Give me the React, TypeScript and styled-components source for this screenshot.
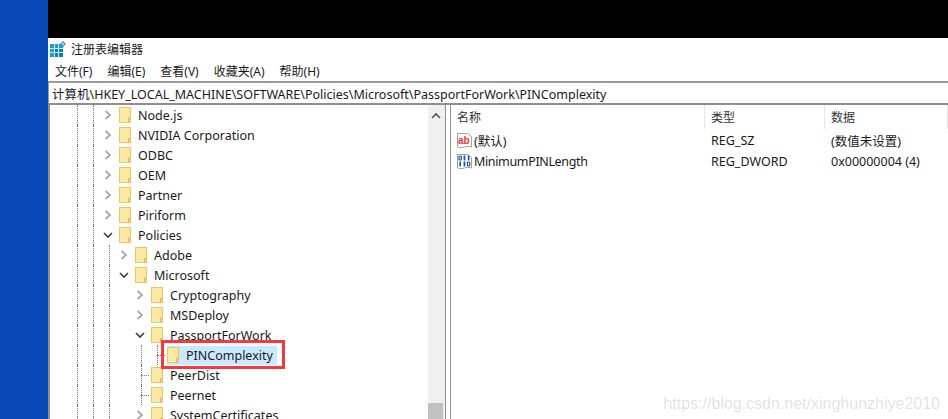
import React from 'react';
import styled, { createGlobalStyle } from 'styled-components';

const UI_FONT = '"Noto Sans", "Noto Sans CJK SC", sans-serif';

const GlobalStyle = createGlobalStyle`
  html, body {
    margin: 0;
    padding: 0;
    background: #fff;
  }
  * {
    box-sizing: border-box;
  }
`;

const Screen = styled.div`
  width: 948px;
  height: 419px;
  display: flex;
  overflow: hidden;
  position: relative;
  font-family: ${UI_FONT};
  color: #1a1a1a;
`;

const Desktop = styled.div`
  width: 48px;
  flex: none;
  background: #0a48b8;
`;

const Main = styled.div`
  flex: 1;
  display: flex;
  flex-direction: column;
  min-width: 0;
`;

const BlackBand = styled.div`
  height: 38px;
  flex: none;
  background: #000;
`;

const TitleBar = styled.div`
  height: 22px;
  flex: none;
  display: flex;
  align-items: center;
  gap: 5px;
  padding: 0 0 0 2px;
  font-size: 12px;
  background: #fff;
`;

const MenuBar = styled.div`
  height: 21px;
  flex: none;
  display: flex;
  align-items: center;
  gap: 15px;
  padding: 0 0 0 7px;
  font-size: 12px;
`;

const AddressBar = styled.div`
  height: 24px;
  flex: none;
  display: flex;
  align-items: center;
  padding-left: 3px;
  font-size: 12.5px;
  white-space: nowrap;
  border-top: 2px solid #9b9b9b;
  border-bottom: 2px solid #8f8f8f;
  border-left: 1px solid #9b9b9b;
`;

const Panes = styled.div`
  flex: 1;
  display: flex;
  min-height: 0;
`;

const TreePane = styled.div`
  width: 397px;
  flex: none;
  display: flex;
  border-left: 2px solid #8f8f8f;
`;

const Tree = styled.div`
  flex: 1;
  padding-left: 19px;
  overflow: hidden;
`;

const Row = styled.div`
  height: 20px;
  display: flex;
  align-items: center;
  font-size: 12.5px;
  white-space: nowrap;
`;

const IndentCell = styled.div<{ $line?: boolean; $tee?: boolean }>`
  width: 16px;
  height: 20px;
  flex: none;
  position: relative;
  display: flex;
  align-items: center;
  justify-content: center;

  &::before {
    content: '';
    position: absolute;
    left: 8px;
    top: 0;
    bottom: 0;
    border-left: ${({ $line }) => ($line ? '1px dotted #777' : 'none')};
  }

  &::after {
    content: '';
    position: absolute;
    left: 8px;
    right: 0;
    top: 10px;
    border-top: ${({ $tee }) => ($tee ? '1px dotted #777' : 'none')};
  }
`;

const FolderSlot = styled.div`
  margin-left: 2px;
  width: 12px;
  height: 16px;
  flex: none;
  display: flex;
`;

const Label = styled.span`
  margin-left: 7px;
`;

const SelectedRow = styled(Row)`
  position: relative;
`;

const SelectedBg = styled.div`
  display: flex;
  align-items: center;
  height: 19px;
  margin-left: 2px;
  padding: 0 4px 0 0;
  background: #cce8ff;

  ${FolderSlot} {
    margin-left: 0;
  }
`;

const RedBox = styled.div`
  position: absolute;
  left: 92px;
  top: -5px;
  width: 124px;
  height: 29px;
  border: 3px solid #f4383c;
  z-index: 2;
`;

const ScrollBar = styled.div`
  width: 17px;
  flex: none;
  background: #f0f0f0;
  display: flex;
  flex-direction: column;
  justify-content: space-between;
  padding-top: 7px;
`;

const ScrollArrow = styled.svg`
  margin-left: 3px;
`;

const ScrollThumb = styled.div`
  width: 15px;
  height: 16px;
  background: #c1c1c1;
`;

const Splitter = styled.div`
  width: 6px;
  flex: none;
  border-left: 1px solid #8f8f8f;
  border-right: 1px solid #8f8f8f;
`;

const ListPane = styled.div`
  flex: 1;
  display: flex;
  flex-direction: column;
  min-width: 0;
`;

const ListHeader = styled.div`
  display: grid;
  grid-template-columns: 254px 120px 1fr;
  height: 25px;
  padding-bottom: 1px;
  font-size: 12px;
  color: #333;
`;

const HeaderCell = styled.div`
  display: flex;
  align-items: center;
  padding-left: 6px;
  border-right: 1px solid #e5e5e5;
`;

const ListRow = styled.div`
  display: grid;
  grid-template-columns: 254px 120px 1fr;
  height: 21px;
  align-items: center;
  font-size: 12.5px;
  white-space: nowrap;
`;

const NameCell = styled.div`
  display: flex;
  align-items: center;
  gap: 1px;
  padding-left: 5px;
`;

const LongName = styled.span`
  letter-spacing: -0.35px;
`;

const ValueCell = styled.div`
  padding-left: 6px;
`;

const Watermark = styled.div`
  position: absolute;
  right: 8px;
  bottom: 6px;
  font-family: "Liberation Sans", sans-serif;
  font-size: 16px;
  color: rgba(150, 150, 150, 0.28);
`;

const ChevronSvg = styled.svg`
  position: relative;
  z-index: 1;
  left: -1px;
  background: #fff;
`;

const Chevron: React.FC<{ open?: boolean }> = ({ open }) => (
  <ChevronSvg width="10" height="10" viewBox="0 0 10 10">
    {open ? (
      <path d="M1 3 L5 7 L9 3" fill="none" stroke="#404040" strokeWidth="1.7" />
    ) : (
      <path d="M2.5 1 L7 5 L2.5 9" fill="none" stroke="#a9a9a9" strokeWidth="1.8" />
    )}
  </ChevronSvg>
);

const Folder: React.FC = () => (
  <svg width="12" height="16" viewBox="0 0 12 16">
    <rect x="0.5" y="0.5" width="11" height="15" fill="#fde48f" stroke="#e9c767" />
    <rect x="1" y="1" width="9" height="14" fill="#fee9a6" />
    <path d="M9.5 15.5 V11.5 H11.5" fill="none" stroke="#dcb44e" />
  </svg>
);

const RegEditIcon: React.FC = () => (
  <svg width="16" height="16" viewBox="0 0 16 16">
    <rect x="0" y="3" width="13" height="13" fill="#1f9bd6" />
    <rect x="5" y="7" width="8" height="9" fill="#0f7fc0" />
    <path d="M4.5 3 V16 M8.5 3 V16 M0 7.5 H13 M0 11.5 H13" stroke="#cdeefa" strokeWidth="1" />
    <path d="M13 0 L16 3 L13 6 L10 3 Z" fill="#2f9fd8" />
    <circle cx="13" cy="3" r="1" fill="#bfe8f8" />
  </svg>
);

const PAGE_OUTLINE = 'M1.5 1.5 H11.5 L15.5 4.5 V15 Q12 13.5 8.5 15 Q5 16.5 1.5 15 Z';

const StringIcon: React.FC = () => (
  <svg width="17" height="18" viewBox="0 0 17 18">
    <path d={PAGE_OUTLINE} fill="#fff" stroke="#a0a0a0" />
    <text x="2" y="11.5" fontSize="10" fontWeight="700" fill="#d6412b" fontFamily="Liberation Sans, sans-serif">ab</text>
  </svg>
);

// binary marks of the DWORD icon: a ring for each 0, a bar for each 1
const BinaryMarks: React.FC<{ y: number; bits: number[] }> = ({ y, bits }) => (
  <>
    {bits.map((bit, i) =>
      bit === 0 ? (
        <rect key={i} x={3 + i * 4.2} y={y + 0.5} width="2.4" height="4" rx="1" fill="none" stroke="#1f4fa8" strokeWidth="1.2" />
      ) : (
        <rect key={i} x={3.4 + i * 4.2} y={y} width="1.7" height="5" fill="#1f4fa8" />
      ),
    )}
  </>
);

const BinaryIcon: React.FC = () => (
  <svg width="17" height="18" viewBox="0 0 17 18">
    <path d={PAGE_OUTLINE} fill="#fff" stroke="#a0a0a0" />
    <BinaryMarks y={2.5} bits={[0, 1, 1]} />
    <BinaryMarks y={8.5} bits={[1, 1, 0]} />
  </svg>
);

type TreeItem = {
  label: string;
  depth: number;
  open?: boolean;
  leaf?: boolean;
  guides: number[];
};

// guides = indent levels that show a dotted vertical line, on top of the two outer ones
const treeItems: TreeItem[] = [
  { label: 'Node.js', depth: 0, guides: [] },
  { label: 'NVIDIA Corporation', depth: 0, guides: [] },
  { label: 'ODBC', depth: 0, guides: [] },
  { label: 'OEM', depth: 0, guides: [] },
  { label: 'Partner', depth: 0, guides: [] },
  { label: 'Piriform', depth: 0, guides: [] },
  { label: 'Policies', depth: 0, open: true, guides: [] },
  { label: 'Adobe', depth: 1, guides: [2] },
  { label: 'Microsoft', depth: 1, open: true, guides: [2] },
  { label: 'Cryptography', depth: 2, guides: [2] },
  { label: 'MSDeploy', depth: 2, guides: [2] },
  { label: 'PassportForWork', depth: 2, open: true, guides: [2] },
  { label: 'PINComplexity', depth: 3, leaf: true, guides: [2, 4] },
  { label: 'PeerDist', depth: 2, leaf: true, guides: [2] },
  { label: 'Peernet', depth: 2, leaf: true, guides: [2] },
  { label: 'SystemCertificates', depth: 2, guides: [2] },
];

const TreeRow: React.FC<{ item: TreeItem }> = ({ item }) => {
  const own = item.depth + 2;
  const selected = item.label === 'PINComplexity';
  const cells = [];
  for (let i = 0; i <= own; i++) {
    const isOwn = i === own;
    const line = i < 2 || item.guides.includes(i) || (isOwn && !!item.leaf);
    cells.push(
      <IndentCell key={i} $line={line} $tee={isOwn && item.leaf}>
        {isOwn && !item.leaf && <Chevron open={item.open} />}
      </IndentCell>,
    );
  }

  if (selected) {
    return (
      <SelectedRow>
        {cells}
        <SelectedBg>
          <FolderSlot><Folder /></FolderSlot>
          <Label>{item.label}</Label>
        </SelectedBg>
        <RedBox />
      </SelectedRow>
    );
  }

  return (
    <Row>
      {cells}
      <FolderSlot><Folder /></FolderSlot>
      <Label>{item.label}</Label>
    </Row>
  );
};

const App: React.FC = () => (
  <>
    <GlobalStyle />
    <Screen>
      <Desktop />
      <Main>
        <BlackBand />
        <TitleBar>
          <RegEditIcon />
          注册表编辑器
        </TitleBar>
        <MenuBar>
          <span>文件(F)</span>
          <span>编辑(E)</span>
          <span>查看(V)</span>
          <span>收藏夹(A)</span>
          <span>帮助(H)</span>
        </MenuBar>
        <AddressBar>计算机\HKEY_LOCAL_MACHINE\SOFTWARE\Policies\Microsoft\PassportForWork\PINComplexity</AddressBar>
        <Panes>
          <TreePane>
            <Tree>
              {treeItems.map(item => (
                <TreeRow key={item.label} item={item} />
              ))}
            </Tree>
            <ScrollBar>
              <ScrollArrow width="10" height="7" viewBox="0 0 10 7">
                <path d="M1 6 L5 2 L9 6" fill="none" stroke="#555" strokeWidth="1.6" />
              </ScrollArrow>
              <ScrollThumb />
            </ScrollBar>
          </TreePane>
          <Splitter />
          <ListPane>
            <ListHeader>
              <HeaderCell>名称</HeaderCell>
              <HeaderCell>类型</HeaderCell>
              <HeaderCell>数据</HeaderCell>
            </ListHeader>
            <ListRow>
              <NameCell><StringIcon />(默认)</NameCell>
              <ValueCell>REG_SZ</ValueCell>
              <ValueCell>(数值未设置)</ValueCell>
            </ListRow>
            <ListRow>
              <NameCell><BinaryIcon /><LongName>MinimumPINLength</LongName></NameCell>
              <ValueCell>REG_DWORD</ValueCell>
              <ValueCell>0x00000004 (4)</ValueCell>
            </ListRow>
          </ListPane>
        </Panes>
      </Main>
      <Watermark>https://blog.csdn.net/xinghunzhiye2010</Watermark>
    </Screen>
  </>
);

export default App;
